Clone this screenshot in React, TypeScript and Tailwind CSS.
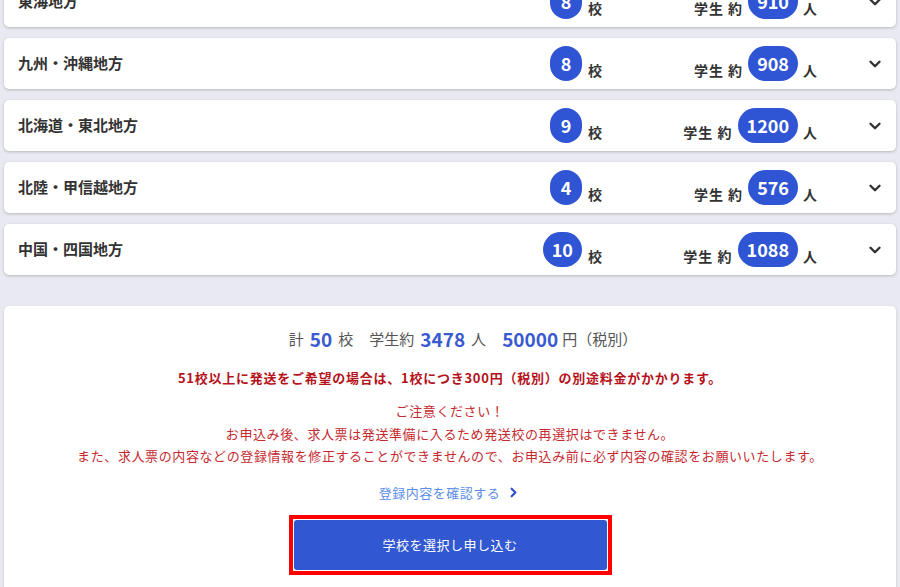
import { ChevronDown, ChevronRight } from "lucide-react";

type Region = {
  name: string;
  schools: number;
  students: number;
};

const regions: Region[] = [
  { name: "東海地方", schools: 8, students: 910 },
  { name: "九州・沖縄地方", schools: 8, students: 908 },
  { name: "北海道・東北地方", schools: 9, students: 1200 },
  { name: "北陸・甲信越地方", schools: 4, students: 576 },
  { name: "中国・四国地方", schools: 10, students: 1088 },
];

const font = { fontFamily: '"Noto Sans CJK JP", "Noto Sans", sans-serif' };

const RegionRow = ({ region }: { region: Region }) => (
  <div className="flex h-[51px] items-center rounded-[5px] bg-white shadow-[0_1px_3px_rgba(0,0,0,0.22)]">
    <div className="w-[480px] pl-[14px] text-[15px] font-bold text-[#333]">{region.name}</div>
    <div className="flex w-[118px] items-end justify-end gap-[6px]">
      <span className="flex h-[35px] min-w-[32px] items-center justify-center rounded-full bg-[#2f55d4] px-[9px] text-[18px] font-bold text-white">
        {region.schools}
      </span>
      <span className="mb-[1px] text-[14px] font-bold leading-5 text-[#333]">校</span>
    </div>
    <div className="flex w-[215px] items-end justify-end gap-[5px]">
      <span className="mb-[1px] text-[14px] font-bold leading-5 tracking-[1px] text-[#333]">学生 約</span>
      <span className="flex h-[35px] min-w-[35px] items-center justify-center rounded-full bg-[#2f55d4] px-[9px] text-[18px] font-bold text-white">
        {region.students}
      </span>
      <span className="mb-[1px] text-[14px] font-bold leading-5 text-[#333]">人</span>
    </div>
    <ChevronDown className="ml-auto mr-[12px] h-[18px] w-[18px] text-[#333]" strokeWidth={3.2} />
  </div>
);

export default function App() {
  return (
    <div className="h-[587px] overflow-hidden bg-[#e9eaf1] px-1" style={font}>
      <div className="-mt-[24px] flex flex-col gap-[11px]">
        {regions.map((r) => (
          <RegionRow key={r.name} region={r} />
        ))}
      </div>

      <div className="mt-[31px] flex flex-col items-center rounded-[5px] bg-white pb-10 pt-[19px] shadow-[0_1px_3px_rgba(0,0,0,0.15)]">
        <p className="flex h-[28px] items-center pl-[26px] text-[15px] text-[#555]">
          計<span className="ml-[6px] mr-[6px] text-[19px] font-bold text-[#3a5bd0]">50</span>校
          <span className="ml-[16px]">学生約</span>
          <span className="ml-[6px] mr-[6px] text-[19px] font-bold text-[#3a5bd0]">3478</span>人
          <span className="ml-[16px] mr-[4px] text-[19px] font-bold text-[#3a5bd0]">50000</span>円（税別）
        </p>

        <p className="mt-[15px] text-[13px] font-bold leading-5 tracking-[0.75px] text-[#b5121b]">
          51校以上に発送をご希望の場合は、1校につき300円（税別）の別途料金がかかります。
        </p>

        <div className="mt-[12px] text-center text-[13px] leading-[22.5px] tracking-[0.6px] text-[#c62a2f]">
          <p>ご注意ください！</p>
          <p>お申込み後、求人票は発送準備に入るため発送校の再選択はできません。</p>
          <p>また、求人票の内容などの登録情報を修正することができませんので、お申込み前に必ず内容の確認をお願いいたします。</p>
        </div>

        <a className="mt-[15px] flex h-5 items-center gap-[6px] text-[13px] tracking-[0.5px] text-[#5b8de8]">
          登録内容を確認する
          <ChevronRight className="h-[15px] w-[15px] text-[#2d4fc9]" strokeWidth={3.5} />
        </a>

        <div className="mt-[12px] border-4 border-[#ff0000] bg-white p-px">
          <button className="flex h-[50px] w-[313px] items-center justify-center rounded-[3px] bg-[#3158d0] text-[13px] tracking-[0.5px] text-white">
            学校を選択し申し込む
          </button>
        </div>
      </div>
    </div>
  );
}
